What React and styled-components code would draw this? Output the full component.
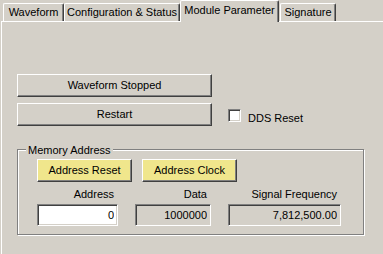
import React from 'react';
import styled, { createGlobalStyle } from 'styled-components';

const GlobalStyle = createGlobalStyle`
  html, body { margin: 0; padding: 0; background: #d4d0c8; }
  body { font-family: "Liberation Sans", Arial, sans-serif; font-size: 11px; }
`;

const Window = styled.div`
  width: 383px;
  height: 254px;
  overflow: hidden;
  background: #d4d0c8;
  display: flex;
  flex-direction: column;
  color: #000;
  font-family: "Liberation Sans", Arial, sans-serif;
  font-size: 11px;
  line-height: 13px;
`;

const TabStrip = styled.div`
  display: flex;
  align-items: flex-end;
  height: 21px;
  padding-left: 3px;
  flex-shrink: 0;
  position: relative;
  z-index: 1;
`;

const Tab = styled.div`
  box-sizing: border-box;
  width: ${(p) => p.$w}px;
  height: ${(p) => (p.$active ? 22 : 18)}px;
  margin-bottom: ${(p) => (p.$active ? -1 : 0)}px;
  margin-left: ${(p) => p.$ml || 0}px;
  padding-top: ${(p) => (p.$active ? 3 : 2)}px;
  text-align: center;
  white-space: nowrap;
  background: #d4d0c8;
  border-top: 1px solid #fff;
  border-left: 1px solid #fff;
  border-right: 1px solid #404040;
  box-shadow: inset -1px 0 0 #808080;
  border-top-left-radius: 2px;
  border-top-right-radius: 2px;
`;

const Panel = styled.div`
  flex: 1;
  margin-left: 1px;
  border-top: 1px solid #fff;
  border-left: 1px solid #fff;
  padding: 52px 0 0 15px;
  display: flex;
  flex-direction: column;
  align-items: flex-start;
`;

const Button = styled.button`
  box-sizing: border-box;
  width: ${(p) => p.$w}px;
  height: 23px;
  padding: 0;
  margin: 0;
  font: inherit;
  line-height: 13px;
  color: #000;
  background: ${(p) => (p.$yellow ? '#f0e68c' : '#d4d0c8')};
  border: 1px solid;
  border-color: #fff #404040 #404040 #fff;
  box-shadow: inset -1px -1px 0 #808080;
  display: flex;
  align-items: center;
  justify-content: center;
  cursor: default;
`;

const Row = styled.div`
  display: flex;
  align-items: flex-start;
  margin-top: ${(p) => p.$mt || 0}px;
  gap: ${(p) => p.$gap || 0}px;
`;

const CheckGroup = styled.label`
  display: flex;
  align-items: flex-start;
  margin: 6px 0 0 16px;
`;

const CheckBox = styled.span`
  box-sizing: border-box;
  width: 13px;
  height: 13px;
  background: #fff;
  border: 1px solid;
  border-color: #808080 #fff #fff #808080;
  box-shadow: inset 1px 1px 0 #404040, inset -1px -1px 0 #d4d0c8;
`;

const CheckText = styled.span`
  margin: 3px 0 0 7px;
`;

const GroupBox = styled.div`
  position: relative;
  box-sizing: border-box;
  width: 347px;
  margin-top: 23px;
  border: 1px solid #808080;
  box-shadow: inset 1px 1px 0 #fff, 1px 1px 0 #fff;
  padding: 9px 0 8px 19px;
`;

const Legend = styled.span`
  position: absolute;
  top: -6px;
  left: 8px;
  padding: 0 2px;
  background: #d4d0c8;
  line-height: 13px;
`;

const Field = styled.div`
  display: flex;
  flex-direction: column;
  width: ${(p) => p.$w}px;
`;

const FieldLabel = styled.div`
  text-align: right;
  padding-right: 4px;
  height: 13px;
  white-space: nowrap;
`;

const Input = styled.input`
  box-sizing: border-box;
  width: 100%;
  height: 22px;
  margin: 3px 0 0;
  padding: 0 3px;
  font: inherit;
  color: #000;
  text-align: right;
  background: ${(p) => (p.$white ? '#fff' : '#d4d0c8')};
  border: 1px solid;
  border-color: #808080 #fff #fff #808080;
  box-shadow: inset 1px 1px 0 #404040, inset -1px -1px 0 #d4d0c8;
  outline: none;
`;

export default function App() {
  return (
    <Window>
      <GlobalStyle />
      <TabStrip>
        <Tab $w={61}>Waveform</Tab>
        <Tab $w={116}>Configuration &amp; Status</Tab>
        <Tab $w={99} $active>Module Parameter</Tab>
        <Tab $w={56} $ml={1}>Signature</Tab>
      </TabStrip>
      <Panel>
        <Button $w={195}>Waveform Stopped</Button>
        <Row $mt={6}>
          <Button $w={195}>Restart</Button>
          <CheckGroup>
            <CheckBox />
            <CheckText>DDS Reset</CheckText>
          </CheckGroup>
        </Row>
        <GroupBox>
          <Legend>Memory Address</Legend>
          <Row $gap={10}>
            <Button $w={95} $yellow>Address Reset</Button>
            <Button $w={95} $yellow>Address Clock</Button>
          </Row>
          <Row $mt={6} $gap={17}>
            <Field $w={81}>
              <FieldLabel>Address</FieldLabel>
              <Input $white readOnly value="0" />
            </Field>
            <Field $w={76}>
              <FieldLabel>Data</FieldLabel>
              <Input readOnly value="1000000" />
            </Field>
            <Field $w={113}>
              <FieldLabel>Signal Frequency</FieldLabel>
              <Input readOnly value="7,812,500.00" />
            </Field>
          </Row>
        </GroupBox>
      </Panel>
    </Window>
  );
}
